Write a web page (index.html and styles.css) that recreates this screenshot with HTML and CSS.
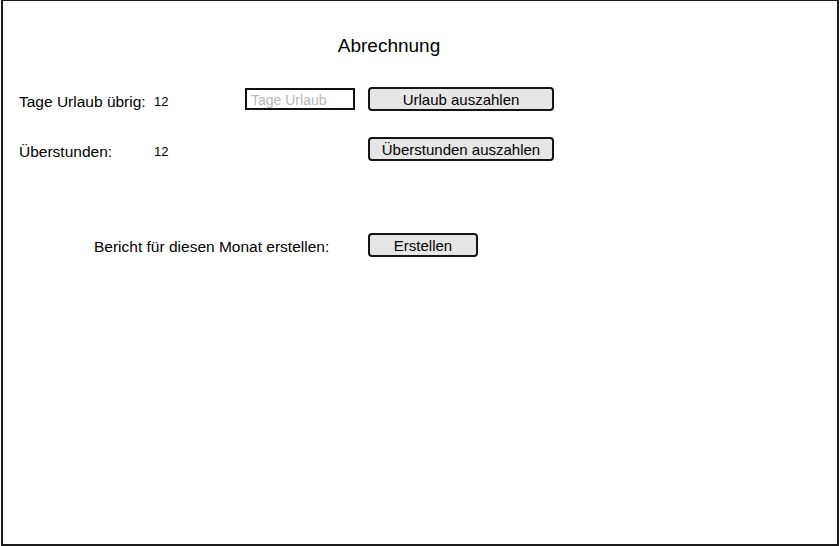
FILE: index.html
```html
<!DOCTYPE html>
<html lang="de">
<head>
<meta charset="utf-8">
<title>Abrechnung</title>
<link rel="stylesheet" href="styles.css">
</head>
<body>
<div class="frame">
  <h1 class="title">Abrechnung</h1>
  <div class="grid">
    <div class="label">Tage Urlaub übrig:</div>
    <div class="value">12</div>
    <div class="field"><input class="input" type="text" placeholder="Tage Urlaub"></div>
    <button class="btn btn-wide">Urlaub auszahlen</button>

    <div class="label">Überstunden:</div>
    <div class="value">12</div>
    <div class="field"></div>
    <button class="btn btn-wide">Überstunden auszahlen</button>
  </div>
  <div class="report">
    <div class="report-label">Bericht für diesen Monat erstellen:</div>
    <button class="btn btn-small">Erstellen</button>
  </div>
</div>
</body>
</html>
```
FILE: styles.css
```css
html, body {
  margin: 0;
  padding: 0;
  background: #ffffff;
}
body {
  width: 840px;
  height: 546px;
  overflow: hidden;
  font-family: "Liberation Sans", Arial, sans-serif;
  color: #000;
}
.frame {
  box-sizing: border-box;
  margin-left: 1px;
  width: 838px;
  height: 546px;
  border: 2px solid #1c1c1c;
  border-top-width: 1px;
  padding: 0 0 0 16px;
}
.title {
  margin: 34px 0 0 0;
  font-size: 19px;
  font-weight: normal;
  line-height: 22px;
  height: 22px;
  text-align: center;
  padding-right: 78px;
}
.grid {
  margin-top: 30px;
  display: grid;
  grid-template-columns: 135px 91px 123px 185px;
  grid-auto-rows: 24px;
  row-gap: 26px;
  align-items: stretch;
}
.label {
  box-sizing: border-box;
  font-size: 15.5px;
  line-height: 20px;
  padding-top: 5px;
}
.value {
  box-sizing: border-box;
  font-size: 13px;
  line-height: 20px;
  padding-top: 5px;
}
.field {
  height: 24px;
  display: flex;
  align-items: center;
}
.input {
  box-sizing: border-box;
  width: 110px;
  height: 22px;
  border: 2px solid #111;
  border-radius: 0;
  padding: 1px 4px 0 4px;
  margin: 0;
  font-family: "Liberation Sans", Arial, sans-serif;
  font-size: 14px;
  outline: none;
  background: #fff;
}
.input::placeholder {
  color: #b8b8b8;
}
.btn {
  box-sizing: border-box;
  height: 24px;
  margin: 0;
  padding: 2px 0 0 0;
  background: #e6e6e6;
  border: 2px solid #141414;
  border-radius: 4px;
  font-family: "Liberation Sans", Arial, sans-serif;
  font-size: 15px;
  line-height: 18px;
  color: #000;
}
.btn-wide {
  width: 186px;
}
.btn-small {
  width: 110px;
}
.report {
  margin-top: 72px;
  padding-left: 75px;
  display: flex;
  align-items: stretch;
  height: 24px;
}
.report-label {
  box-sizing: border-box;
  width: 274px;
  font-size: 15.5px;
  line-height: 20px;
  padding-top: 4px;
}
```
